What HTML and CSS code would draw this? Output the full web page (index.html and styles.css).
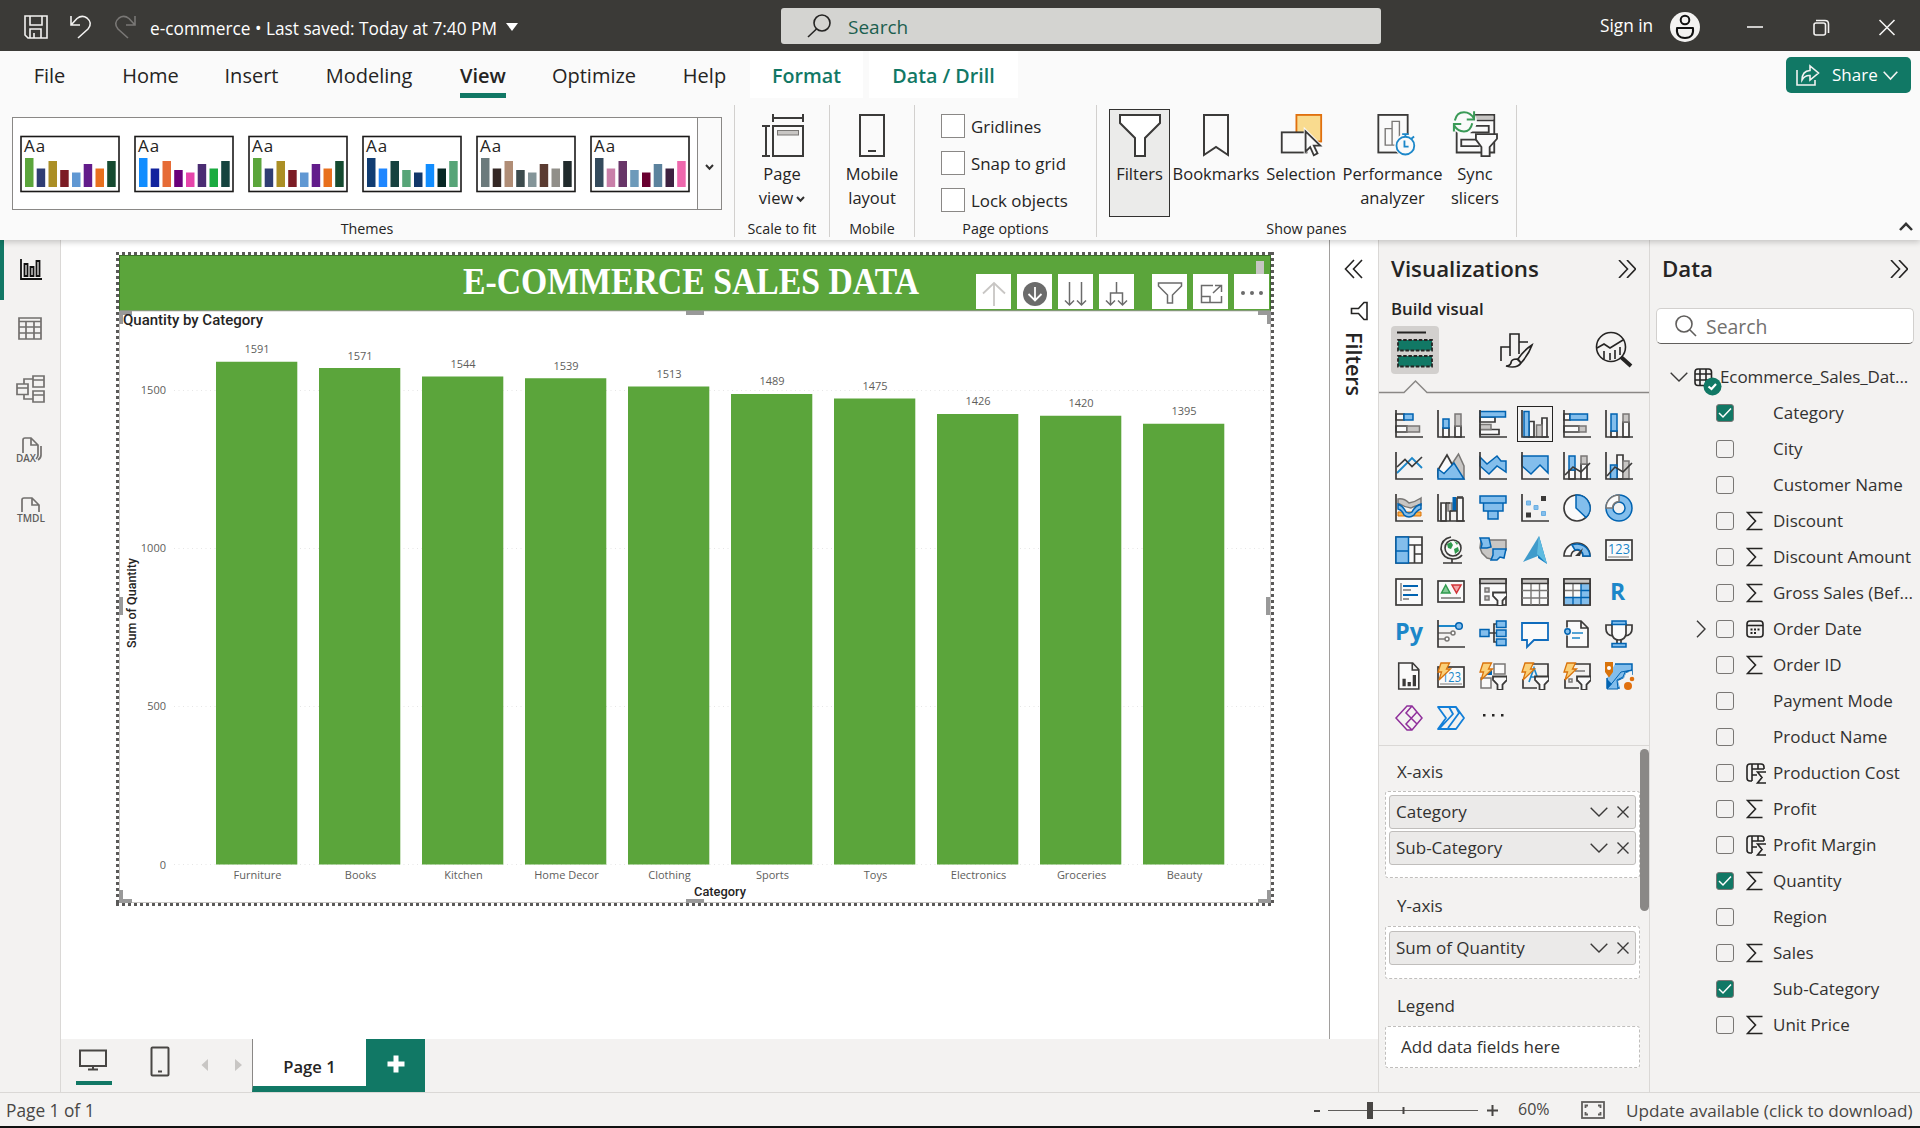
FILE: index.html
```html
<!DOCTYPE html>
<html lang="en">
<head>
<meta charset="utf-8">
<title>e-commerce</title>
<link rel="stylesheet" href="styles.css">
</head>
<body>
<svg class="defs" aria-hidden="true">
  <symbol id="sigma" viewBox="0 0 18 20"><path d="M16.500 1.500H1.500L9.500 10 1.500 18.500H16.500" class="ln"/></symbol>
  <symbol id="calc" viewBox="0 0 21 21"><path d="M6 18H4Q1 18 1 15V4Q1 1 4 1H15Q18 1 18 4V6M6 1V18M12 1V6M6 6H18M6 12H11M20 9H11.500L16 14.500 11.500 20H20" class="ln"/></symbol>
  <symbol id="cal" viewBox="0 0 18 18"><rect x="1" y="1" width="16" height="16" rx="3" class="ln"/><path d="M1 5.500H17" class="ln"/><path d="M4.500 9.500h2M8 9.500h2M11.500 9.500h2M4.500 13h2M8 13h2" stroke="#252423" stroke-width="2"/></symbol>
  <symbol id="down" viewBox="0 0 18 10"><path d="M.7.7 9 9 17.300.7" class="thin"/></symbol>
  <symbol id="cross" viewBox="0 0 12 12"><path d="M.5.5 11.500 11.500M11.500.5.5 11.500" class="thin"/></symbol>
  <symbol id="more" viewBox="0 0 18 18"><path d="M1 0 9.500 9 1 18M9 0 17.500 9 9 18" class="ln"/></symbol>
  <symbol id="tick" viewBox="0 0 18 18"><path d="M3 9 7 13 15 4.500" fill="none" stroke="#fff" stroke-width="1.500"/></symbol>
  <symbol id="axis" viewBox="0 0 28 28"><path d="M1 0V27H28" class="k"/></symbol>
  <symbol id="bolt" viewBox="0 0 28 28"><path d="M4 1H12.500L9.500 7H13.500L2 18 4.500 10H1Z" fill="#fbd078" stroke="#d9730b" stroke-width="1.300"/></symbol>
  <symbol id="fun" viewBox="0 0 28 28"><path d="M14 14.500H28V18L23.500 22.500V28H18.500V22.500L14 18Z" fill="#fafafa" stroke="#3b3a39" stroke-width="1.800"/></symbol>
</svg>

<header class="titlebar">
  <svg class="tb-save" width="24" height="24" viewBox="0 0 24 24"><path d="M1 1H23V23H4L1 20ZM6 1V10H18V1M6 23V14H17V23M10 23V18" class="lite"/></svg>
  <svg class="tb-undo" width="22" height="24" viewBox="0 0 22 24"><path d="M1 1V10H10M1 10 7 3.500Q12-.5 17 3 23 8 18 14L8 23" class="lite"/></svg>
  <svg class="tb-redo" width="22" height="24" viewBox="0 0 22 24"><path d="M20 1V10H11M20 10 14 3.500Q9-.5 4 3-2 8 3 14L13 23" class="dimmed"/></svg>
  <span class="doc">e-commerce &bull; Last saved: Today at 7:40 PM</span>
  <span class="caret"></span>
  <div class="topsearch">
    <svg width="24" height="24" viewBox="0 0 24 24"><circle cx="15" cy="9" r="8" class="ln"/><path d="M9.500 15 1 23" class="ln"/></svg>
    <span>Search</span>
  </div>
  <span class="signin">Sign in</span>
  <svg class="avatar" width="30" height="30" viewBox="0 0 30 30"><circle cx="15" cy="15" r="15" fill="#f3f2f1"/><circle cx="15" cy="8" r="4.300" fill="none" stroke="#111" stroke-width="2"/><path d="M7 16H23Q24 26 15 26 6 26 7 16Z" fill="none" stroke="#111" stroke-width="2" stroke-linejoin="round"/></svg>
  <svg class="winbtns" width="150" height="18" viewBox="0 0 150 18"><path d="M0 8H16" class="lite"/><rect x="67" y="4" width="11.500" height="12" rx="2" class="lite"/><path d="M69 1.500H78Q81.500 1.500 81.500 5V14" class="lite"/><path d="M132.500 1 147.500 16M147.500 1 132.500 16" class="lite"/></svg>
</header>

<nav class="menu">
  <a class="m-file">File</a><a class="m-home">Home</a><a class="m-insert">Insert</a><a class="m-model">Modeling</a><a class="m-view"><b>View</b></a><a class="m-opt">Optimize</a><a class="m-help">Help</a><a class="ctx m-format">Format</a><a class="ctx m-drill">Data / Drill</a>
  <div class="share">
    <svg width="24" height="22" viewBox="0 0 24 22"><path d="M1 6V21H19V16M6 16Q6 7 14 6.500V2L22.500 9 14 16V11.500Q9 11 6 16Z" class="lite"/></svg>
    <span>Share</span>
    <svg width="15" height="9" viewBox="0 0 15 9"><path d="M.7.7 7.500 8 14.300.7" class="lite"/></svg>
  </div>
</nav>

<section class="ribbon">
  <div class="group g-themes">
    <div class="gallery">
      <div class="thumbs">
        <svg width="100" height="58" viewBox="0 0 100 58"><rect x="1" y="1.500" width="98" height="55" class="card"/><text x="4" y="17">Aa</text><g transform="translate(5 52)"><path d="M0 0V-29H8.500V0" fill="#5ba53b"/><path d="M11.700 0V-18.500h8.500V0" fill="#2f3d73"/><path d="M23.500 0V-26h8.500V0" fill="#ab8f25"/><path d="M35.200 0V-17h8.500V0" fill="#7c1c25"/><path d="M47 0V-14.500h8.500V0" fill="#6098d3"/><path d="M58.700 0V-23h8.500V0" fill="#621c8b"/><path d="M70.500 0V-18.500h8.500V0" fill="#e8701e"/><path d="M82.200 0V-26h8.500V0" fill="#154a30"/></g></svg>
        <svg width="100" height="58" viewBox="0 0 100 58"><rect x="1" y="1.500" width="98" height="55" class="card"/><text x="4" y="17">Aa</text><g transform="translate(5 52)"><path d="M0 0V-29H8.500V0" fill="#118dff"/><path d="M11.700 0V-18.500h8.500V0" fill="#12239e"/><path d="M23.500 0V-26h8.500V0" fill="#e66c37"/><path d="M35.200 0V-17h8.500V0" fill="#6b007b"/><path d="M47 0V-14.500h8.500V0" fill="#e645ab"/><path d="M58.700 0V-23h8.500V0" fill="#4a2c72"/><path d="M70.500 0V-18.500h8.500V0" fill="#1aab40"/><path d="M82.200 0V-26h8.500V0" fill="#15443f"/></g></svg>
        <svg width="100" height="58" viewBox="0 0 100 58"><rect x="1" y="1.500" width="98" height="55" class="card"/><text x="4" y="17">Aa</text><g transform="translate(5 52)"><path d="M0 0V-29H8.500V0" fill="#5ba53b"/><path d="M11.700 0V-18.500h8.500V0" fill="#2f3d73"/><path d="M23.500 0V-26h8.500V0" fill="#ab8f25"/><path d="M35.200 0V-17h8.500V0" fill="#7c1c25"/><path d="M47 0V-14.500h8.500V0" fill="#6098d3"/><path d="M58.700 0V-23h8.500V0" fill="#621c8b"/><path d="M70.500 0V-18.500h8.500V0" fill="#e8701e"/><path d="M82.200 0V-26h8.500V0" fill="#154a30"/></g></svg>
        <svg width="100" height="58" viewBox="0 0 100 58"><rect x="1" y="1.500" width="98" height="55" class="card"/><text x="4" y="17">Aa</text><g transform="translate(5 52)"><path d="M0 0V-29H8.500V0" fill="#103c72"/><path d="M11.700 0V-18.500h8.500V0" fill="#1e86ff"/><path d="M23.500 0V-26h8.500V0" fill="#16413f"/><path d="M35.200 0V-17h8.500V0" fill="#57a578"/><path d="M47 0V-14.500h8.500V0" fill="#12386a"/><path d="M58.700 0V-23h8.500V0" fill="#118dff"/><path d="M70.500 0V-18.500h8.500V0" fill="#072724"/><path d="M82.200 0V-26h8.500V0" fill="#57a578"/></g></svg>
        <svg width="100" height="58" viewBox="0 0 100 58"><rect x="1" y="1.500" width="98" height="55" class="card"/><text x="4" y="17">Aa</text><g transform="translate(5 52)"><path d="M0 0V-29H8.500V0" fill="#6b7a7c"/><path d="M11.700 0V-18.500h8.500V0" fill="#352825"/><path d="M23.500 0V-26h8.500V0" fill="#b08d76"/><path d="M35.200 0V-17h8.500V0" fill="#3c4b4d"/><path d="M47 0V-14.500h8.500V0" fill="#849599"/><path d="M58.700 0V-23h8.500V0" fill="#5b3b31"/><path d="M70.500 0V-18.500h8.500V0" fill="#918f89"/><path d="M82.200 0V-26h8.500V0" fill="#202a2c"/></g></svg>
        <svg width="100" height="58" viewBox="0 0 100 58"><rect x="1" y="1.500" width="98" height="55" class="card"/><text x="4" y="17">Aa</text><g transform="translate(5 52)"><path d="M0 0V-29H8.500V0" fill="#344a5c"/><path d="M11.700 0V-18.500h8.500V0" fill="#c97fa9"/><path d="M23.500 0V-26h8.500V0" fill="#683568"/><path d="M35.200 0V-17h8.500V0" fill="#6d9aba"/><path d="M47 0V-14.500h8.500V0" fill="#690030"/><path d="M58.700 0V-23h8.500V0" fill="#5b829d"/><path d="M70.500 0V-18.500h8.500V0" fill="#3d2140"/><path d="M82.200 0V-26h8.500V0" fill="#ee68ad"/></g></svg>
      </div>
      <div class="gdrop"><svg width="9" height="6" viewBox="0 0 9 6"><path d="M1 1 4.500 4.700 8 1" class="mid"/></svg></div>
    </div>
    <div class="glabel">Themes</div>
  </div>
  <div class="group g-scale">
    <div class="btns"><div class="rb w95"><svg width="44" height="44" viewBox="0 0 44 44"><path d="M13 0V8M43 0V8M13 4H43M2 12H10M2 42H10M6 12V42" class="ik"/><rect x="13" y="12" width="30" height="30" class="ikw"/><rect x="17.500" y="16.500" width="21" height="4.500" fill="#c8c6c4" stroke="#797775"/></svg><span>Page<br>view<svg class="vw" width="9" height="6" viewBox="0 0 9 6"><path d="M1 1 4.500 4.700 8 1" class="mid"/></svg></span></div></div>
    <div class="glabel">Scale to fit</div>
  </div>
  <div class="group g-mobile">
    <div class="btns"><div class="rb w95"><svg width="28" height="44" viewBox="0 0 28 44"><rect x="2" y="1" width="24" height="41" class="ikw"/><path d="M10 37H18" class="ik"/></svg><span>Mobile<br>layout</span></div></div>
    <div class="glabel">Mobile</div>
  </div>
  <div class="group g-options">
    <div class="checks"><label><i></i><span>Gridlines</span></label><label><i></i><span>Snap to grid</span></label><label><i></i><span>Lock objects</span></label></div>
    <div class="glabel">Page options</div>
  </div>
  <div class="group g-panes">
    <div class="btns">
      <div class="rb on"><svg width="44" height="44" viewBox="0 0 44 44"><path d="M2 1H42V9L27 24V42H17V24L2 9Z" class="ikw"/></svg><span>Filters</span></div>
      <div class="rb p-book"><svg width="28" height="44" viewBox="0 0 28 44"><path d="M2 1H26V41L14 33 2 41Z" class="ikw"/></svg><span>Bookmarks</span></div>
      <div class="rb p-sel"><svg width="44" height="48" viewBox="0 0 44 48"><rect x="17" y="1" width="27" height="29" fill="#f9db8f" stroke="#e0700e" stroke-width="2"/><rect x="1" y="20" width="27" height="22" class="ikw"/><path d="M25 14V45L32 38 38 47 44 43 38 35H46Z" fill="#fafafa"/><path d="M27 19V41L32 36 36 45 40 43 36 34.500H43Z" class="ikw"/></svg><span>Selection</span></div>
      <div class="rb p-perf"><svg width="38" height="48" viewBox="0 0 38 48"><rect x="3" y="1" width="32" height="41" class="ikw"/><path d="M10.500 34V16H18V34ZM18 34V8H26V34Z" fill="#fafafa" stroke="#797775" stroke-width="1.500"/><circle cx="32.500" cy="34" r="12" fill="#fafafa"/><circle cx="32.500" cy="34.500" r="9.700" fill="#fafafa" stroke="#1c87c9" stroke-width="2"/><path d="M31.500 29V35.500H36M29 22H36M32.500 22V25M39 27 42 24.500" fill="none" stroke="#1c87c9" stroke-width="2"/></svg><span>Performance<br>analyzer</span></div>
      <div class="rb p-sync"><svg width="50" height="48" viewBox="0 0 50 48"><path d="M5 18V42H46V1H25V7H46M25 13H40V20H20M34 28H10V35H30" class="ik"/><path d="M26 2H45V6H26Z" fill="#c8c6c4"/><circle cx="13" cy="8" r="14" fill="#fafafa"/><path d="M3 7Q5-2 13-2 20-2 24 5M24-3V6H16M22 10Q20 19 13 19 6 19 2 12M2 19V11H10" fill="none" stroke="#3a9a57" stroke-width="2.200"/><path d="M26 22H49V27L41 36V46H32V36L26 28Z" class="ikw"/></svg><span>Sync<br>slicers</span></div>
    </div>
    <div class="glabel">Show panes</div>
  </div>
  <svg class="collapse" width="14" height="9" viewBox="0 0 14 9"><path d="M1 8 7 1.800 13 8" fill="none" stroke="#333" stroke-width="2.500"/></svg>
</section>

<main class="work">
  <aside class="rail">
    <div class="ri active"><svg width="28" height="28" viewBox="0 0 28 28"><path d="M4 3V23H25M7.500 8V20H10.500V8ZM13.500 11V20H16.500V11ZM19.500 5V20H22.500V5Z" fill="none" stroke="#111" stroke-width="1.800"/></svg></div>
    <div class="ri"><svg width="28" height="28" viewBox="0 1 28 28"><path d="M3 3H25V24H3ZM3 6.500H25M3 12H25M3 18H25M10 6.500V24M18 6.500V24" class="rg"/></svg></div>
    <div class="ri"><svg width="30" height="30" viewBox="0 1 30 30"><path d="M18 2H29V13H18ZM18 6H29M2 10H13V20.500H2ZM2 14H13M18 17H29V28H18ZM18 21H29M9 10V5H18M9 21V25H18" class="rg"/></svg></div>
    <div class="ri"><svg width="30" height="30" viewBox="0 0 30 30"><path d="M8 18V5Q8 3 10 3H16L23 10V20Q23 22 21 24M16 3V10H23M26 11V20Q26 23 23 25" class="rg"/><text x="1" y="26.500" textLength="20" lengthAdjust="spacingAndGlyphs" class="rt">DAX</text></svg></div>
    <div class="ri"><svg width="30" height="30" viewBox="0 0 30 30"><path d="M7 17V5Q7 3 9 3H17L24 10V17M17 3V10H24" class="rg"/><text x="2" y="26.500" textLength="28" lengthAdjust="spacingAndGlyphs" class="rt">TMDL</text></svg></div>
  </aside>

  <section class="center">
    <div class="stage">
      <div class="canvas">
        <svg width="1268" height="799" viewBox="61 240 1268 799">
          <rect x="119.500" y="255.500" width="1151" height="55" fill="#5ba53b" stroke="#3c6f28"/>
          <text x="463" y="294" textLength="456" lengthAdjust="spacingAndGlyphs" class="rtitle">E-COMMERCE SALES DATA</text>
          <path d="M119.500 311V902.500H1270.500V311Z" fill="#fff" stroke="#c8c6c4"/>
          <path d="M116 253.500H1274M116 904.500H1274" class="dots"/>
          <path d="M117.500 252V906M1272.500 252V906" class="dots"/>
          <g fill="#fff"><path d="M976 274h35v35h-35zM1017 274h35v35h-35zM1058 274h35v35h-35zM1099 274h35v35h-35zM1152 274h35v35h-35zM1193 274h35v35h-35zM1234 274h35v35h-35z"/></g>
          <path d="M1256 261h8v13h-8z" fill="#c8c6c4"/>
          <path d="M994 306V283M983 293.500 994 283 1005 293.500" fill="none" stroke="#c8c6c4" stroke-width="1.800"/>
          <circle cx="1035" cy="294" r="12" fill="#6b6b6b"/><path d="M1035 287V300M1028.500 294 1035 300.500 1041.500 294" fill="none" stroke="#fff" stroke-width="1.800"/>
          <g class="hd"><path d="M1069.500 282V305M1065 300.500 1069.500 305 1074 300.500M1081.500 282V305M1077 300.500 1081.500 305 1086 300.500"/><path d="M1116.500 282V293M1110.500 305V293H1122.500V305M1106 300.500 1110.500 305 1115 300.500M1118 300.500 1122.500 305 1127 300.500"/><path d="M1158.500 283H1181.500V286L1172.500 295V303H1167.500V295L1158.500 286Z"/><path d="M1213 285.500H1201.500V302.500H1221.500V296M1201.500 296.500H1210V302.500M1213 293 1221 285.500M1215 285.500H1221.500V292"/></g>
          <g fill="#6b6b6b"><circle cx="1243" cy="293" r="2"/><circle cx="1252" cy="293" r="2"/><circle cx="1261" cy="293" r="2"/></g>
          <path d="M174 390.500H1266M174 548.500H1266M174 706.500H1266M174 864.500H1266" stroke="#e6e6e6" stroke-dasharray="1 3.500"/>
          <g class="hdl"><path d="M121 324V313H132M1258 313H1269V324M121 890V901H132M1258 901H1269V890"/><path d="M686 313H704M686 901H704M121 597V615M1268 597V615"/></g>
          <text x="123" y="325" textLength="140" lengthAdjust="spacingAndGlyphs" class="ctitle">Quantity by Category</text>
          <g fill="#5ba53b">
            <path d="M216 361.800h81.300V864.500H216zM319 368.100h81.300V864.500H319zM422 376.600h81.300V864.500H422zM525 378.200h81.300V864.500H525zM628 386.400h81.300V864.500H628zM731 394h81.300V864.500H731zM834 398.400h81.300V864.500H834zM937 413.900h81.300V864.500H937zM1040 415.800h81.300V864.500H1040zM1143 423.700h81.300V864.500H1143z"/>
          </g>
          <g class="cl" text-anchor="middle">
            <text x="257" y="353">1591</text><text x="360" y="360">1571</text><text x="463" y="368">1544</text><text x="566" y="370">1539</text><text x="669" y="378">1513</text><text x="772" y="385">1489</text><text x="875" y="390">1475</text><text x="978" y="405">1426</text><text x="1081" y="407">1420</text><text x="1184" y="415">1395</text>
            <text x="257.500" y="879">Furniture</text><text x="360.500" y="879">Books</text><text x="463.500" y="879">Kitchen</text><text x="566.500" y="879">Home Decor</text><text x="669.500" y="879">Clothing</text><text x="772.500" y="879">Sports</text><text x="875.500" y="879">Toys</text><text x="978.500" y="879">Electronics</text><text x="1081.500" y="879">Groceries</text><text x="1184.500" y="879">Beauty</text>
          </g>
          <g class="cl" text-anchor="end"><text x="166" y="394">1500</text><text x="166" y="552">1000</text><text x="166" y="710">500</text><text x="166" y="869">0</text></g>
          <text x="694" y="896" textLength="52" lengthAdjust="spacingAndGlyphs" class="at">Category</text>
          <text transform="translate(136 648) rotate(-90)" textLength="90" lengthAdjust="spacingAndGlyphs" class="at">Sum of Quantity</text>
        </svg>
      </div>
      <aside class="filters">
        <svg width="18" height="18" viewBox="0 0 18 18"><path d="M9 0 .5 9 9 18M17 0 8.500 9 17 18" class="ln"/></svg>
        <svg class="cone" width="18" height="20" viewBox="0 0 18 20"><path d="M17 1.500V18.500H14L8.500 12.500H1.500V7.500H8.500L14 1.500Z" class="ln"/></svg>
        <span>Filters</span>
      </aside>
    </div>
    <footer class="pages">
      <div class="desk"><svg width="30" height="22" viewBox="0 0 30 22"><path d="M2 1.500H28V17H2ZM15 17V20M10 20.500H20" class="pg"/></svg></div>
      <svg class="phone" width="20" height="31" viewBox="0 0 20 31"><rect x="1.500" y="1.500" width="17" height="28" rx="1" class="pg"/><path d="M8 25.500H12" class="pg"/></svg>
      <svg class="prev" width="42" height="14" viewBox="0 0 42 14"><path d="M7 1V13L.5 7ZM34 1V13L41 7Z" fill="#c8c6c4"/></svg>
      <div class="ptab">Page 1</div>
      <div class="padd"><svg width="18" height="18" viewBox="0 0 18 18"><path d="M9 .5V17.500M.5 9H17.500" stroke="#fff" stroke-width="5"/></svg></div>
    </footer>
  </section>

  <aside class="viz">
    <div class="phead"><h2>Visualizations</h2><svg width="18" height="18"><use href="#more"/></svg></div>
    <h3>Build visual</h3>
    <div class="modes">
      <div class="mode sel"><svg width="36" height="38" viewBox="0 0 36 38"><path d="M0 1.500H29" stroke="#252423" stroke-width="2"/><g fill="#117865" stroke="#252423" stroke-width="1.800" stroke-dasharray="3.500 1.700"><rect x="1" y="9" width="34" height="10.500"/><rect x="1" y="25" width="34" height="10.500"/></g></svg></div>
      <div class="mode m2"><svg width="34" height="36" viewBox="0 0 34 36"><path d="M2 29V15H11V2H20V22M11 15V24M20 10H29" class="ln"/><path d="M33 13Q25 18 19 27L22 31Q30 22 33 13ZM18 27Q12 27 12 31 11 34 7 34 18 37 22 31Z" fill="#f3f2f1" stroke="#252423" stroke-width="1.700"/></svg></div>
      <div class="mode m3"><svg width="38" height="38" viewBox="0 0 38 38"><circle cx="16" cy="16" r="14.500" class="ln"/><path d="M2 17 9 13 15 17 28 9M9 28V20M15 29V22M20 28V19M25 24V16" class="ln"/><path d="M26 26 36 35" stroke="#252423" stroke-width="4"/></svg></div>
    </div>
    <svg class="notch" width="270" height="14" viewBox="0 0 270 14"><path d="M0 12.500H25L36.500 1 48 12.500H270" fill="none" stroke="#8a8886" stroke-width="1.500"/></svg>
    <div class="icons">
      <svg viewBox="0 0 28 28"><path d="M1 4H9V10H1ZM1 16H12V22H1Z" class="w"/><path d="M9 4H18V10H9Z" class="b"/><path d="M12 16H24.500V22H12Z" class="g"/><use href="#axis"/></svg>
      <svg viewBox="0 0 28 28"><path d="M6 18H12V27H6ZM18 16H24V27H18Z" class="w"/><path d="M6 9H12V18H6Z" class="b"/><path d="M18 4H24V16H18Z" class="g"/><use href="#axis"/></svg>
      <svg viewBox="0 0 28 28"><path d="M1 7H16V12H1ZM1 19.500H20V24.500H1Z" class="w"/><path d="M1 1.500H26.500V7H1Z" class="b"/><path d="M1 14.500H12V19.500H1Z" class="g"/><use href="#axis"/></svg>
      <svg class="picked" viewBox="0 0 28 28"><path d="M8 11.500H13V27H8ZM21 8H26V27H21Z" class="w"/><path d="M3 1.500H8V27H3Z" class="b"/><path d="M15.500 15H21V27H15.500Z" class="g"/><use href="#axis"/></svg>
      <svg viewBox="0 0 28 28"><path d="M1 4H7V10H1ZM1 16H16V22H1Z" class="w"/><path d="M7 4H24.500V10H7Z" class="b"/><path d="M16 16H23V22H16Z" class="g"/><use href="#axis"/></svg>
      <svg viewBox="0 0 28 28"><path d="M6 21H12V27H6ZM18 12H24V27H18Z" class="w"/><path d="M6 4H12V21H6Z" class="b"/><path d="M18 4H24V12H18Z" class="g"/><use href="#axis"/></svg>

      <svg viewBox="0 0 28 28"><path d="M2 21 17 6 22 11 27 16" fill="none" stroke="#1c87c9" stroke-width="1.800"/><path d="M2 15 10 7.500 17 14.500 27 5" class="k"/><use href="#axis"/></svg>
      <svg viewBox="0 0 28 28"><path d="M15 12 21.500 2 27 14V27H15Z" class="g"/><path d="M1 18 10 3 22 25H1Z" class="w"/><path d="M1 17 7 21.500 17 11 27 27H1Z" class="b"/></svg>
      <svg viewBox="0 0 28 28"><path d="M1 5 8 12 18 4 22 9H27V20L18 14 10 22 1 14Z" class="b"/><use href="#axis"/></svg>
      <svg viewBox="0 0 28 28"><path d="M1 4H27V21L19 13 10 22 1 14Z" class="b"/><use href="#axis"/></svg>
      <svg viewBox="0 0 28 28"><path d="M6 18H12V27H6ZM18 12H24V27H18Z" class="w"/><path d="M6 4H12V18H6Z" class="b"/><path d="M18 4H24V12H18Z" class="g"/><path d="M2 23 10 15 18 20 27 11" class="k"/><use href="#axis"/></svg>
      <svg viewBox="0 0 28 28"><path d="M12 3H18V27H12Z" class="w"/><path d="M5.500 13H12V27H5.500Z" class="b"/><path d="M18 9H24V27H18Z" class="g"/><path d="M2 24 10 15 18 20 27 11" class="k"/><use href="#axis"/></svg>

      <svg viewBox="0 0 28 28"><path d="M3 18H26V22H3Z" fill="#fbb24c" stroke="#d9730b"/><path d="M3 5Q9 4 14 9 20 8 26 4V11Q19 12 16 14 9 13 3 9Z" class="g"/><path d="M3 10Q8 12 11 18 14 20 17 18 20 12 26 10V15Q22 16 19 21 14 25 9 21 7 16 3 15Z" class="b"/><use href="#axis"/></svg>
      <svg viewBox="0 0 28 28"><path d="M4 9H9V27H4ZM20 4H26V27H20Z" class="w"/><path d="M11 9H15V17H11Z" class="g"/><path d="M15.500 3H19V17H15.500Z" fill="#0063b1"/><path d="M9 9H13M13 17V27M13 17H20M20 3H26" class="k"/><use href="#axis"/></svg>
      <svg viewBox="0 0 28 28"><path d="M1 2H27V9H1ZM4.500 9H24V17H4.500ZM9 17H19V25H9Z" class="b"/></svg>
      <svg viewBox="0 0 28 28"><path d="M20 2h5v5h-5zM5 18.500h5v5H5z" fill="#3b3a39"/><path d="M5.500 7h4v4h-4zM13 11.500h4v4h-4zM20.500 17.500h4v4h-4z" fill="#83beec" stroke="#6aaee2"/><use href="#axis"/></svg>
      <svg viewBox="0 0 28 28"><circle cx="14" cy="14" r="13" class="w"/><path d="M14 1A13 13 0 0 1 23 23.500L13 14V1Z" class="b"/></svg>
      <svg viewBox="0 0 28 28"><circle cx="14" cy="14" r="9.500" fill="none" stroke="#0063b1" stroke-width="8.500"/><circle cx="14" cy="14" r="9.500" fill="none" stroke="#83beec" stroke-width="5.500"/><path d="M1 14A13 13 0 0 1 14 1V7.500A6.500 6.500 0 0 0 7.500 14Z" fill="#fafafa" stroke="#797775" stroke-width="1.500"/></svg>

      <svg viewBox="0 0 28 28"><path d="M1 1H27V27H1ZM14 9H27M19.500 9V27M19.500 18H27" class="w"/><path d="M1 1H13.500V27H1ZM1 15H13.500" class="b"/></svg>
      <svg viewBox="0 0 28 28"><circle cx="16" cy="12" r="8" fill="#fafafa" stroke="#3b3a39" stroke-width="1.600"/><path d="M10 8 14 6 16 9 14 13 11 12ZM17 13 21 11 22 15 18 18ZM17 5 21 7 20 9Z" fill="#2f9a4d"/><path d="M14 1Q4 3 4 13 6 23 16 23 22 23 25 19M15 23V27M6 27H25" class="k"/></svg>
      <svg viewBox="0 0 28 28"><path d="M10 4H27V14L22 20 12 23 8 22 3 17 1 12 2 4Z" class="g"/><path d="M1 2H10L12 11 8 12H2L3 8ZM14 13H27L25 22 21 21 18 24H12L14 19Z" class="b"/></svg>
      <svg viewBox="0 0 28 28"><path d="M18 0 26 28 17 22Z" fill="#0a74bf"/><path d="M18 0 2 26 17 20Z" fill="#3f9bcb"/><path d="M18 0 26 28 16 18Z" fill="#5ebbe0"/></svg>
      <svg viewBox="0 0 28 28"><path d="M1 20A13 13 0 0 1 27 20H20A6 6 0 0 0 8 20Z" class="w"/><path d="M9 9A13 13 0 0 1 27 20H20A6 6 0 0 0 12 14Z" class="b"/><path d="M20 12 17 20H12Z" fill="#3b3a39"/></svg>
      <svg viewBox="0 0 28 28"><rect x="1" y="4" width="26" height="20" class="w"/><text x="3" y="18" textLength="22" lengthAdjust="spacingAndGlyphs" class="n1">123</text><path d="M3 21H24" stroke="#797775"/></svg>

      <svg viewBox="0 0 28 28"><rect x="1" y="1" width="26" height="26" class="w"/><path d="M6 5V23M8 12H16M8 21H14" stroke="#797775" stroke-width="1.300"/><path d="M8 8H23M8 17H23" stroke="#0063b1" stroke-width="2.200"/></svg>
      <svg viewBox="0 0 28 28"><rect x="1" y="3" width="26" height="21" class="w"/><path d="M4.500 15H13L8.700 7Z" fill="#83c995" stroke="#2f9a4d" stroke-width="1.500"/><path d="M15 7H24L19.500 15Z" fill="#f1a5a9" stroke="#d13438" stroke-width="1.500"/><path d="M4 20H24" stroke="#797775" stroke-width="1.500"/></svg>
      <svg viewBox="0 0 28 28"><rect x="1" y="1" width="26" height="26" class="w"/><path d="M1 1H27V5.500H1Z" class="gk"/><path d="M6 10h4v4H6zM6 18h4v4H6z" class="g"/><use href="#fun"/></svg>
      <svg viewBox="0 0 28 28"><rect x="1" y="1" width="26" height="26" class="w"/><path d="M1 12.500H27M1 20H27M10 5V27M18.500 5V27" stroke="#797775" stroke-width="1.400"/><path d="M1 1H27V5.500H1Z" class="gk"/></svg>
      <svg viewBox="0 0 28 28"><rect x="1" y="1" width="26" height="26" class="w"/><path d="M18 6H27V27H1V19H18Z" fill="#83beec"/><path d="M1 12.500H18M10 5V19" stroke="#797775" stroke-width="1.400"/><path d="M18 6V27M18 12.500H27M1 19.500H27M10 19V27" stroke="#0063b1" stroke-width="1.400"/><path d="M1 1H27V5.500H1Z" class="gk"/><path d="M1 5V27H27V5" class="k"/></svg>
      <svg viewBox="0 0 28 28"><text x="5" y="22" class="lang">R</text></svg>

      <svg viewBox="0 0 28 28"><text x="0" y="20" textLength="28" lengthAdjust="spacingAndGlyphs" class="lang">Py</text></svg>
      <svg viewBox="0 0 28 28"><path d="M1 6H18" stroke="#1c87c9" stroke-width="2"/><path d="M1 13H15M1 19H9" stroke="#797775" stroke-width="1.700"/><circle cx="22" cy="6" r="3.300" class="b"/><circle cx="16" cy="13" r="2" class="gw"/><circle cx="10" cy="19" r="2" class="gw"/><use href="#axis"/></svg>
      <svg viewBox="0 0 28 28"><path d="M10 13H16M18 4H15V22H18M15 13H18" class="k"/><path d="M1 9.500H10V16.500H1ZM17.500 1H27V7.500H17.500ZM17.500 10H27V16.500H17.500ZM17.500 19H27V25.500H17.500Z" class="b"/></svg>
      <svg viewBox="0 0 28 28"><path d="M1 3H27V20H13L6 27V20H1Z" fill="#fafafa" stroke="#0f6cbd" stroke-width="1.800"/></svg>
      <svg viewBox="0 0 28 28"><path d="M4 1H18L25 8V27H4ZM18 1V8H25" class="w"/><path d="M9 13H20M9 18H17" stroke="#1c87c9" stroke-width="1.500"/><circle cx="4.500" cy="11.500" r="4" fill="#f3f2f1"/><circle cx="4.500" cy="11.500" r="2.700" class="b"/></svg>
      <svg viewBox="0 0 28 28"><path d="M7 5H1V9Q1 15 8 16M21 5H27V9Q27 15 20 16M12 20V24M16 20V24" class="k"/><path d="M7 4H21V14Q20 20 14 20 8 20 7 14Z" class="w"/><path d="M7 1H21V4.500H7ZM7 23.500H21V27H7Z" class="b"/></svg>

      <svg viewBox="0 0 28 30"><path d="M3 1H18L24.500 8V29H3ZM17.500 1V8.500H24.500" class="w"/><path d="M7 18h3.500v8H7zM12.500 21.500H16v4.500h-3.500zM18 14h3.500v12H18z" fill="#3b3a39"/></svg>
      <svg viewBox="0 0 28 28"><rect x="1" y="5" width="26" height="20" class="w"/><text x="5" y="19.500" textLength="19" lengthAdjust="spacingAndGlyphs" class="n1">123</text><path d="M3 22H25" stroke="#797775"/><use href="#bolt"/></svg>
      <svg viewBox="0 0 28 28"><path d="M15 2H26V12H15ZM2 16H12V26H2Z" class="gw"/><path d="M8 8H13V13H8Z" fill="#0063b1"/><use href="#bolt"/><use href="#fun"/></svg>
      <svg viewBox="0 0 28 28"><path d="M11 2H27V14M2 17V26H16" class="k"/><path d="M8 20 13 6 18 20M10 15H16" fill="none" stroke="#1c87c9" stroke-width="1.700"/><use href="#bolt"/><use href="#fun"/></svg>
      <svg viewBox="0 0 28 28"><path d="M11 2H27V14M2 17V26H16" class="k"/><path d="M12 9H22M13 19H17M6 17h3v3H6z" fill="none" stroke="#797775" stroke-width="1.500"/><use href="#bolt"/><use href="#fun"/></svg>
      <svg viewBox="0 0 28 28"><path d="M10 2H27V12L22 10 20 16 14 18 15 26H2V16" class="b"/><path d="M27 8 20 10 18 15 12 18 13 27H2L8 20 16 10Z" fill="#83beec" stroke="#0063b1"/><path d="M27 9 21 11 19 16 13 19 15 27 27 27Z" fill="#f3f2f1"/><path d="M2 17 7 22 2 27Z" fill="#0063b1"/><path d="M0 0H8V10L4 15.500 0 10Z" fill="#d9730b"/><circle cx="4" cy="6" r="2" fill="#fff"/><circle cx="23" cy="24" r="4" fill="#e0700e"/><circle cx="27" cy="17" r="2.300" fill="#e0700e"/></svg>

      <svg viewBox="0 0 28 28"><path d="M12 2 1 14 12 26H17L27 14 17 2ZM17 2 11 9 22 20M17 26 11 20 22 8" fill="none" stroke="#8f2f9b" stroke-width="1.500"/></svg>
      <svg viewBox="0 0 28 28"><path d="M1 3H19L27 14 19 25H1L9 14ZM3 24 16 10 12 3M11 24 22 9 19 3" fill="none" stroke="#127fd8" stroke-width="1.800" stroke-linejoin="round"/></svg>
      <svg viewBox="0 0 28 28"><path d="M4 10h2.500v2.500H4zM13 10h2.500v2.500H13zM22 10h2.500v2.500H22z" fill="#252423"/></svg>
    </div>
    <div class="wells">
      <div class="wl">
        <h4>X-axis</h4>
        <div class="well w1"><div class="pill">Category<svg width="18" height="10"><use href="#down"/></svg><svg width="12" height="12"><use href="#cross"/></svg></div><div class="pill">Sub-Category<svg width="18" height="10"><use href="#down"/></svg><svg width="12" height="12"><use href="#cross"/></svg></div></div>
        <h4>Y-axis</h4>
        <div class="well w2"><div class="pill">Sum of Quantity<svg width="18" height="10"><use href="#down"/></svg><svg width="12" height="12"><use href="#cross"/></svg></div></div>
        <h4>Legend</h4>
        <div class="well w3">Add data fields here</div>
      </div>
      <div class="thumb"></div>
    </div>
  </aside>

  <aside class="data">
    <div class="phead"><h2>Data</h2><svg width="18" height="18"><use href="#more"/></svg></div>
    <div class="dsearch"><svg width="22" height="22" viewBox="0 0 22 22"><circle cx="9" cy="9" r="8" fill="none" stroke="#605e5c" stroke-width="1.600"/><path d="M15 15 21 21" stroke="#605e5c" stroke-width="1.600"/></svg><span>Search</span></div>
    <div class="table"><svg width="18" height="10"><use href="#down"/></svg><svg class="tbl" width="28" height="28" viewBox="0 0 28 28"><rect x="1" y="1" width="16.500" height="16.500" rx="3" class="ln"/><path d="M6 1V17M12 1V17M1 6H17M1 12H17" class="ln"/><circle cx="18.500" cy="18.500" r="9" fill="#117865"/><path d="M14.500 18.500 17.500 21 22 16" fill="none" stroke="#fff" stroke-width="2.200"/></svg><span>Ecommerce_Sales_Dat...</span></div>
    <ul class="fields">
      <li><i class="on"><svg width="18" height="18"><use href="#tick"/></svg></i><em></em>Category</li>
      <li><i></i><em></em>City</li>
      <li><i></i><em></em>Customer Name</li>
      <li><i></i><em><svg width="18" height="20"><use href="#sigma"/></svg></em>Discount</li>
      <li><i></i><em><svg width="18" height="20"><use href="#sigma"/></svg></em>Discount Amount</li>
      <li><i></i><em><svg width="18" height="20"><use href="#sigma"/></svg></em>Gross Sales (Bef...</li>
      <li class="exp"><svg width="10" height="18" viewBox="0 0 10 18"><path d="M1 .7 9 9 1 17.300" class="thin"/></svg><i></i><em><svg width="18" height="18"><use href="#cal"/></svg></em>Order Date</li>
      <li><i></i><em><svg width="18" height="20"><use href="#sigma"/></svg></em>Order ID</li>
      <li><i></i><em></em>Payment Mode</li>
      <li><i></i><em></em>Product Name</li>
      <li><i></i><em><svg width="21" height="21"><use href="#calc"/></svg></em>Production Cost</li>
      <li><i></i><em><svg width="18" height="20"><use href="#sigma"/></svg></em>Profit</li>
      <li><i></i><em><svg width="21" height="21"><use href="#calc"/></svg></em>Profit Margin</li>
      <li><i class="on"><svg width="18" height="18"><use href="#tick"/></svg></i><em><svg width="18" height="20"><use href="#sigma"/></svg></em>Quantity</li>
      <li><i></i><em></em>Region</li>
      <li><i></i><em><svg width="18" height="20"><use href="#sigma"/></svg></em>Sales</li>
      <li><i class="on"><svg width="18" height="18"><use href="#tick"/></svg></i><em></em>Sub-Category</li>
      <li><i></i><em><svg width="18" height="20"><use href="#sigma"/></svg></em>Unit Price</li>
    </ul>
  </aside>
</main>

<footer class="status">
  <span class="count">Page 1 of 1</span>
  <svg class="zoomer" width="186" height="20" viewBox="0 0 186 20"><path d="M0 11H6" stroke="#484644" stroke-width="2"/><path d="M14 10.500H164" stroke="#605e5c"/><path d="M89.500 7V14" stroke="#484644" stroke-width="2"/><path d="M53 2h6v17h-6z" fill="#484644"/><path d="M173 10.500H184M178.500 5V16" stroke="#484644" stroke-width="2"/></svg>
  <span class="pct">60%</span>
  <svg class="fit" width="24" height="18" viewBox="0 0 24 18"><rect x="1" y="1" width="22" height="16" fill="none" stroke="#605e5c" stroke-width="1.800"/><path d="M4.500 7V4.500H7M17 4.500H19.500V7M4.500 11V13.500H7M17 13.500H19.500V11" fill="none" stroke="#605e5c" stroke-width="1.800"/></svg>
  <span class="upd">Update available (click to download)</span>
</footer>
</body>
</html>
```
FILE: styles.css
```css
* { box-sizing: border-box; }
body {
  margin: 0;
  width: 1920px;
  height: 1128px;
  overflow: hidden;
  display: flex;
  flex-direction: column;
  font: 17px/1.3 "Open Sans", sans-serif;
  color: #252423;
  background: #fff;
}
svg { display: block; flex: none; overflow: visible; }
.defs { position: absolute; width: 0; height: 0; }
h2, h3, h4, ul { margin: 0; padding: 0; font-weight: 400; }
i, em { font-style: normal; }
span, a, b, li, h2, h3, h4 { white-space: nowrap; }

.ln { fill: none; stroke: #252423; stroke-width: 1.6; }
.thin { fill: none; stroke: #3b3a39; stroke-width: 1.4; }
.lite { fill: none; stroke: #f3f2f1; stroke-width: 1.6; }
.dimmed { fill: none; stroke: #797775; stroke-width: 1.6; }
.mid { fill: none; stroke: #323130; stroke-width: 2; }
.k { fill: none; stroke: #3b3a39; stroke-width: 1.7; }
.w { fill: #fafafa; stroke: #3b3a39; stroke-width: 1.7; }
.b { fill: #83beec; stroke: #0063b1; stroke-width: 1.5; }
.g { fill: #c8c6c4; stroke: #797775; stroke-width: 1.5; }
.gw { fill: #fafafa; stroke: #797775; stroke-width: 1.5; }
.gk { fill: #c8c6c4; stroke: #3b3a39; stroke-width: 1.7; }
.ik { fill: none; stroke: #3b3a39; stroke-width: 2; }
.ikw { fill: #fafafa; stroke: #3b3a39; stroke-width: 2; }
.rg { fill: none; stroke: #72706e; stroke-width: 1.7; }
.pg { fill: none; stroke: #484644; stroke-width: 2; }
.n1 { font: 15px "Open Sans", sans-serif; fill: #1c87c9; }
.lang { font: 700 23px "Open Sans", sans-serif; fill: #1c87c9; }
.rt { font: 600 11px "Open Sans", sans-serif; fill: #605e5c; }

/* Title bar */
.titlebar { height: 51px; flex: none; background: #3b3a37; color: #fff; display: flex; align-items: center; padding-top: 2px; }
.tb-save { margin: 0 0 0 24px; }
.tb-undo { margin: 0 0 0 22px; }
.tb-redo { margin: 0 0 0 23px; }
.doc { width: 346px; margin: 6px 0 0 13px; font-size: 17.25px; }
.caret { margin-left: 10px; border: 6.5px solid transparent; border-top: 8px solid #fff; border-bottom: 0; }
.topsearch { width: 600px; height: 36px; margin: 0 0 1px 263px; padding-left: 26px; background: #d4d4d1; border-radius: 3px; display: flex; align-items: center; gap: 17px; font-size: 19px; color: #1c5f4f; }
.topsearch span { padding-top: 3px; }
.signin { width: 56px; margin-left: 219px; font-size: 17.25px; }
.avatar { margin-left: 14px; }
.winbtns { margin: 3px 0 0 47px; }

/* Menu tabs */
.menu { height: 47px; flex: none; background: #fafafa; display: flex; font-size: 20px; line-height: 49px; position: relative; z-index: 3; }
.menu a { text-align: center; height: 47px; }
.m-file { width: 99px; }
.m-home { width: 103px; }
.m-insert { width: 99px; }
.m-model { width: 136px; }
.m-view { width: 92px; }
.m-view b { display: inline-block; height: 47px; border-bottom: 5px solid #117865; font-weight: 600; vertical-align: top; }
.m-opt { width: 130px; }
.m-help { width: 91px; }
.menu .ctx { background: #fff; color: #117865; font-weight: 600; font-size: 19.7px; }
.m-format { width: 113px; margin-right: 6px; }
.m-drill { width: 149px; }
.share { width: 125px; height: 36px; margin: 6px 0 0 768px; padding-left: 10px; background: #117865; border-radius: 5px; color: #fff; font-size: 17px; display: flex; align-items: center; gap: 12px; line-height: 36px; }
.share span { width: 44px; margin-right: -5px; }

/* Ribbon */
.ribbon { height: 142px; flex: none; background: #fafafa; display: flex; position: relative; z-index: 2; box-shadow: 0 2px 6px rgba(0,0,0,.2); }
.group { display: flex; flex-direction: column; height: 132px; margin-top: 7px; border-right: 1px solid #d2d0ce; }
.glabel { margin-top: auto; text-align: center; font-size: 14.3px; line-height: 20px; height: 18px; }
.g-themes { width: 735px; }
.g-scale { width: 95px; }
.g-mobile { width: 85px; }
.g-options { width: 182px; }
.g-panes { width: 420px; }
.gallery { width: 710px; height: 93px; margin: 12px 0 0 12px; border: 1px solid #8a8886; background: #fff; display: flex; }
.thumbs { width: 684px; padding: 17px 0 0 7px; display: flex; gap: 14px; }
.thumbs text { font: 17px "Open Sans", sans-serif; letter-spacing: 1px; fill: #252423; }
.card { fill: #fff; stroke: #1b1a19; stroke-width: 1.6; }
.gdrop { flex: 1; border-left: 1px solid #8a8886; background: #fafafa; display: flex; align-items: center; justify-content: center; padding-top: 6px; }
.btns { display: flex; height: 108px; }
.rb { display: flex; flex-direction: column; align-items: center; text-align: center; font-size: 16.5px; line-height: 24px; height: 108px; padding-top: 8px; }
.rb > svg { height: 44px; margin-bottom: 5px; }
.rb .ik + svg, .rb span { margin-top: -1px; }
.w95 { width: 100%; padding-top: 9px; }
.vw { display: inline-block; margin-left: 3px; vertical-align: 2px; }
.rb.on { width: 61px; margin: 4px 0 0 12px; padding-top: 4px; border: 1px solid #323130; background: #ebebea; }
.on .ikw { fill: #fff; }
.p-book { width: 92px; }
.p-sel { width: 78px; }
.p-perf { width: 105px; }
.p-sync { width: 60px; }
.g-panes .rb:not(.on) { padding-top: 9px; }
.checks { padding: 9px 0 0 26px; display: flex; flex-direction: column; gap: 13px; }
.checks label { display: flex; align-items: center; gap: 6px; height: 24px; font-size: 16.9px; }
.checks span { padding-top: 2px; }
.checks i { width: 24px; height: 24px; border: 1px solid #8a8886; background: #fff; }
.collapse { position: absolute; right: 7px; bottom: 9px; }

/* Work area */
.work { height: 852px; flex: none; display: flex; background: #f3f2f1; }
.rail { width: 61px; border-right: 1px solid #dad8d6; }
.ri { height: 60px; display: flex; align-items: center; justify-content: center; }
.ri.active { border-left: 4px solid #117865; padding-right: 2px; }
.center { width: 1317px; display: flex; flex-direction: column; }
.stage { height: 799px; display: flex; background: #fff; }
.canvas { width: 1269px; border-right: 1px solid #a19f9d; }
.filters { flex: 1; display: flex; flex-direction: column; align-items: center; padding-top: 20px; }
.cone { margin: 23px 0 0 10px; }
.filters span { writing-mode: vertical-rl; font-weight: 600; font-size: 21.500px; margin-top: 11px; line-height: 24px; }
.dots { fill: none; stroke: #5a5958; stroke-width: 3; stroke-dasharray: 3 3; }
.hd { fill: none; stroke: #6b6b6b; stroke-width: 1.5; }
.hdl { fill: none; stroke: #999; stroke-width: 4; }
.rtitle { font: 700 37px "Liberation Serif", serif; fill: #fff; }
.ctitle { font: 500 15px Roboto, sans-serif; fill: #252423; }
.at { font: 500 12.5px Roboto, sans-serif; fill: #252423; }
.cl { font: 11px "Open Sans", sans-serif; fill: #605e5c; }

/* Page tabs */
.pages { height: 53px; display: flex; align-items: flex-start; background: #f3f2f1; }
.desk { width: 36px; height: 46px; margin-left: 15px; padding: 10px 0 0 2px; border-bottom: 4px solid #117865; }
.phone { margin: 7px 0 0 38px; }
.prev { margin: 19px 9px 0 31px; }
.ptab { width: 114px; height: 53px; background: #fff; border-left: 1px solid #8a8886; border-bottom: 6px solid #117865; text-align: center; font-weight: 600; font-size: 16.6px; line-height: 56px; }
.padd { width: 59px; height: 53px; background: #117865; display: flex; justify-content: center; padding-top: 16px; }

/* Panes */
.phead { display: flex; align-items: center; justify-content: space-between; height: 38px; margin-top: 10px; }
h2 { font-size: 22.3px; font-weight: 600; line-height: 38px; }
.viz { width: 272px; border-left: 1px solid #dad8d6; border-right: 1px solid #dad8d6; display: flex; flex-direction: column; }
.viz .phead { padding: 0 13px 0 12px; }
h3 { font-size: 16.8px; font-weight: 600; padding-left: 12px; height: 38px; line-height: 42px; }
.modes { height: 48px; display: flex; padding-left: 12px; }
.mode { display: flex; align-items: center; justify-content: center; height: 48px; }
.sel { width: 48px; background: #d2d0ce; border-radius: 4px; }
.m2 { margin-left: 60px; }
.m3 { margin-left: 62px; }
.notch { margin-top: 6px; }
.icons { display: grid; grid-template-columns: repeat(6, 42px); grid-auto-rows: 42px; padding: 9px 0 0 9px; height: 352px; flex: none; border-bottom: 1px solid #dad8d6; }
.icons svg { width: 28px; height: 28px; margin: 0; align-self: center; justify-self: center; }
.icons .picked { box-sizing: content-box; padding: 3px; border: 1px solid #252423; }
.wells { flex: 1; display: flex; justify-content: space-between; color: #323130; }
.wl { padding-left: 6px; width: 261px; }
.thumb { width: 9px; height: 162px; margin-top: 3px; border-radius: 5px; background: #8a8886; }
h4 { font-size: 17px; padding-left: 12px; line-height: 48px; height: 48px; }
.well { border: 1px dashed #c0bebc; background: #fff; border-radius: 3px; width: 255px; padding: 3px; display: flex; flex-direction: column; gap: 2px; }
.w1 { height: 87px; }
.w2 { height: 53px; padding-top: 4px; }
.w3 { height: 42px; padding: 0 0 0 15px; line-height: 40px; font-size: 17px; }
.wl h4:first-child { height: 45px; line-height: 51px; }
.wl h4:nth-of-type(2) { line-height: 56px; }
.wl h4:nth-of-type(3) { height: 47px; line-height: 54px; }
.pill { height: 34px; background: #ebeae9; border: 1px solid #c0bebc; border-radius: 3px; display: flex; align-items: center; padding: 0 6px; }
.pill svg:nth-of-type(1) { margin: 0 9px 0 auto; }

.data { flex: 1; }
.data .phead { padding: 0 12px; }
.dsearch { width: 258px; height: 36px; margin: 20px 0 15px 6px; border: 1px solid #d2d0ce; border-bottom-color: #605e5c; border-radius: 5px; background: #fff; display: flex; align-items: center; padding-left: 18px; gap: 9px; font-size: 19.4px; color: #72706e; }
.dsearch span { padding-top: 2px; }
.table { height: 36px; display: flex; align-items: center; padding-left: 20px; color: #323130; }
.table .tbl { margin: 9px 0 0 6px; }
.table span { margin-left: -2px; letter-spacing: -.1px; }
.fields { list-style: none; color: #323130; }
.fields li { height: 36px; display: flex; align-items: center; padding-left: 66px; }
.fields i { width: 18px; height: 18px; border: 1px solid #797775; border-radius: 3px; }
.fields i.on { background: #117865; }
.fields i svg { margin: -1px; }
.fields em { width: 27px; margin-left: 12px; }
.fields .exp { padding-left: 46px; }
.exp > svg { margin-right: 10px; }

/* Status bar */
.status { height: 36px; flex: none; display: flex; align-items: center; padding-left: 6px; color: #484644; background: #f3f2f1; border-top: 1px solid #dad8d6; border-bottom: 2px solid #111; }
.count { font-size: 17.3px; padding-top: 4px; }
.zoomer { margin-left: auto; }
.pct { width: 34px; margin-left: 18px; font-size: 16px; }
.fit { margin-left: 29px; }
.upd { width: 287px; margin: 0 7px 0 21px; padding-top: 4px; font-size: 17.15px; }
```
